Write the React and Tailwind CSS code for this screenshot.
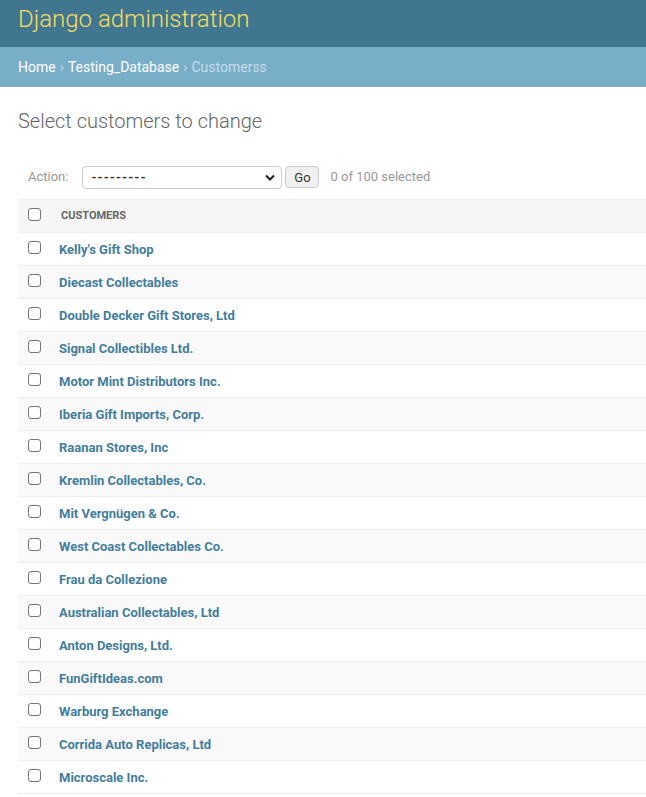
import React from 'react';

const customers = [
  "Kelly's Gift Shop",
  'Diecast Collectables',
  'Double Decker Gift Stores, Ltd',
  'Signal Collectibles Ltd.',
  'Motor Mint Distributors Inc.',
  'Iberia Gift Imports, Corp.',
  'Raanan Stores, Inc',
  'Kremlin Collectables, Co.',
  'Mit Vergnügen & Co.',
  'West Coast Collectables Co.',
  'Frau da Collezione',
  'Australian Collectables, Ltd',
  'Anton Designs, Ltd.',
  'FunGiftIdeas.com',
  'Warburg Exchange',
  'Corrida Auto Replicas, Ltd',
  'Microscale Inc.',
];

function Checkbox() {
  return (
    <span className="block -mt-[3px] w-[13px] h-[13px] rounded-[3px] border border-[#767676] bg-white" />
  );
}

export default function App() {
  return (
    <div className="min-h-screen bg-white text-[13px] text-[#333] font-['Roboto','Liberation_Sans',sans-serif] overflow-hidden">
      <div className="h-[47px] bg-[#417690] px-[18px] flex items-center">
        <h1 className="text-[24px] font-light text-[#f5dd5d] leading-none -mt-[9px]">Django administration</h1>
      </div>
      <div className="h-[40px] bg-[#79aec8] px-[18px] flex items-center text-[14px] text-white">
        <span>Home</span>
        <span className="mx-[4px] text-[#c4dce8]">›</span>
        <span>Testing_Database</span>
        <span className="mx-[4px] text-[#c4dce8]">›</span>
        <span className="text-[#c4dce8]">Customerss</span>
      </div>

      <div className="pl-[18px]">
        <h2 className="mt-[22px] text-[20px] font-light text-[#666] leading-[24px]">Select customers to change</h2>

        <div className="mt-[32px] flex items-center h-[24px] pl-[10px]">
          <span className="text-[13px] text-[#999] mr-[14px]">Action:</span>
          <div className="w-[200px] h-[23px] border border-[#ccc] rounded-[4px] flex items-center justify-between pl-[8px] pr-[6px] bg-white">
            <span className="text-[13px] text-[#333] tracking-[1px] font-bold leading-none">---------</span>
            <svg width="10" height="7" viewBox="0 0 10 7"><path d="M1 1.5 L5 5.5 L9 1.5" stroke="#222" strokeWidth="2" fill="none" /></svg>
          </div>
          <button className="ml-[3px] h-[22px] w-[34px] border border-[#ccc] rounded-[4px] bg-[#f0f0f0] text-[13px] text-[#333] leading-none">Go</button>
          <span className="ml-[11px] text-[13px] text-[#999]">0 of 100 selected</span>
        </div>

        <div className="mt-[10px]">
          <div className="h-[34px] flex items-center bg-[#f6f6f6] border-t border-b border-[#eee]">
            <div className="pl-[10px] w-[43px]"><Checkbox /></div>
            <span className="text-[11px] font-bold text-[#666] uppercase mt-[1px]">Customers</span>
          </div>
          {customers.map((c, i) => (
            <div
              key={c}
              className={`h-[33px] flex items-center border-b border-[#eee] ${i % 2 === 1 ? 'bg-[#f9f9f9]' : 'bg-white'}`}
            >
              <div className="pl-[10px] w-[41px]"><Checkbox /></div>
              <a className="text-[13px] font-bold text-[#447e9b] mt-[1px]">{c}</a>
            </div>
          ))}
        </div>
      </div>
    </div>
  );
}
